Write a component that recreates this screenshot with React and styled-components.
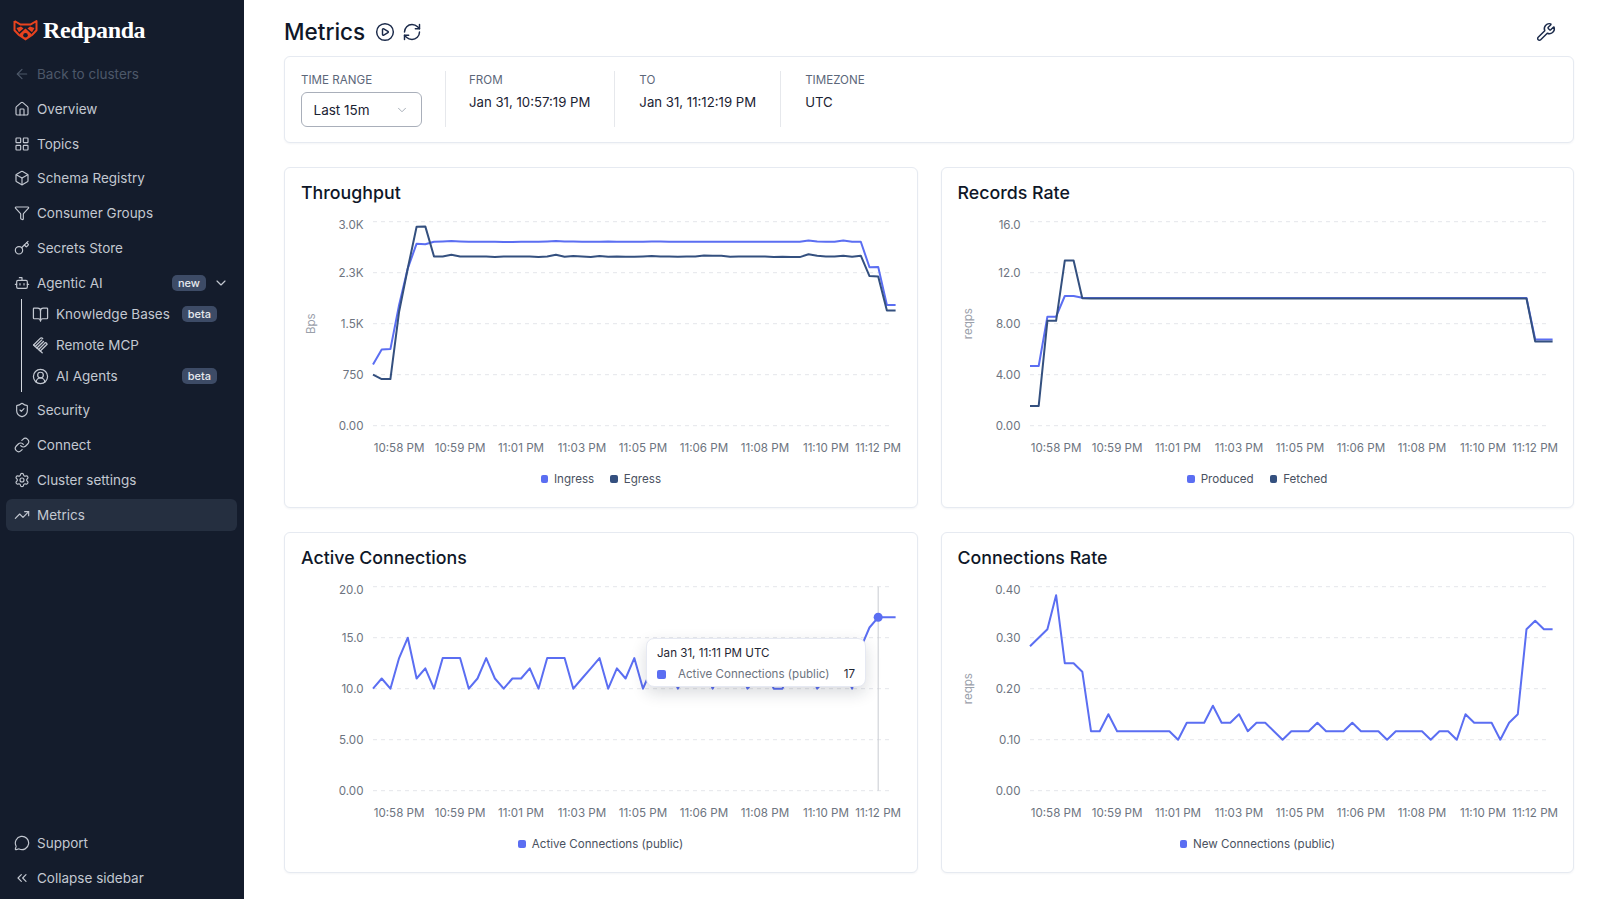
import styled, { createGlobalStyle } from "styled-components";
import {
  ArrowLeft, BookOpen, Bot, Box, ChevronDown, ChevronsLeft, CirclePlay, CircleUserRound,
  Funnel, House, Key, LayoutGrid, Link, MessageCircle, RefreshCw, Settings, ShieldCheck,
  TrendingUp, Wrench,
} from "lucide-react";

const BLUE = "#5b6ef2";
const NAVY = "#34507f";
const TICKS = [
  [3, "10:58 PM"], [10, "10:59 PM"], [17, "11:01 PM"], [24, "11:03 PM"], [31, "11:05 PM"],
  [38, "11:06 PM"], [45, "11:08 PM"], [52, "11:10 PM"], [58, "11:12 PM"],
];
const PLOT = { left: 72, right: 592, top: 15.7, bottom: 219.7, step: 8.71 };

const repeat = (v, n) => Array(n).fill(v);

const ingress = [
  902, 1122, 1127, 1775, 2314, 2676, 2667, 2706, 2711, 2715,
  2711, 2706, 2706, 2706, 2706, 2702, 2702, 2706, 2706, 2706,
  2711, 2715, 2711, 2711, 2706, 2706, 2706, 2711, 2706, 2706,
  2706, 2706, 2711, 2711, 2706, 2706, 2706, 2706, 2706, 2706,
  2706, 2706, 2706, 2706, 2706, 2706, 2706, 2706, 2706, 2706,
  2725, 2711, 2706, 2706, 2725, 2706, 2706, 2330, 2335, 1775, 1775,
];
const egress = [
  750, 686, 686, 1676, 2314, 2926, 2931, 2490, 2490, 2515,
  2490, 2490, 2490, 2490, 2480, 2490, 2490, 2490, 2490, 2480,
  2490, 2515, 2485, 2495, 2490, 2480, 2495, 2485, 2490, 2485,
  2485, 2490, 2495, 2490, 2490, 2485, 2490, 2490, 2505, 2500,
  2500, 2485, 2490, 2490, 2490, 2490, 2480, 2485, 2480, 2480,
  2520, 2500, 2490, 2490, 2500, 2485, 2500, 2200, 2195, 1695, 1695,
];
const produced = [4.68, 4.68, 8.55, 8.55, 10.17, 10.17, 10.03, ...repeat(10.02, 51), 6.77, 6.77, 6.77];
const fetched = [1.55, 1.55, 8.23, 8.23, 12.95, 12.95, 10, ...repeat(9.98, 51), 6.6, 6.6, 6.6];
const active = [
  10, 11, 10, 13, 15, 11, 12, 10, 13, 13, 13, 10, 11, 13, 11, 10, 11, 11, 12, 10,
  13, 13, 13, 10, 11, 12, 13, 10, 12, 11, 13, 10, 12, 11, 12, 10, 12, 11, 12, 10,
  12, 11, 12, 10, 11, 12, 10, 10, 12, 11, 12, 10, 11, 12, 12, 10, 14, 16, 17, 17, 17,
];
const connections = [
  17, 18, 19, 23, 15, 15, 14, 7, 7, 9, 7, 7, 7, 7, 7, 7, 7, 6, 8, 8, 8, 10, 8, 8, 9, 7, 8, 8, 7, 6,
  7, 7, 7, 8, 7, 7, 7, 8, 7, 7, 7, 6, 7, 7, 7, 7, 6, 7, 7, 6, 9, 8, 8, 8, 6, 8, 9, 19, 20, 19, 19,
].map((c) => c / 60);

const GlobalStyle = createGlobalStyle`
  html, body { margin: 0; padding: 0; background: #fff; }
  body { font-family: Inter, "Noto Sans", sans-serif; color: #101828; }
  * { box-sizing: border-box; }
`;

const Layout = styled.div`
  display: flex;
  height: 899px;
  overflow: hidden;
`;

const Sidebar = styled.aside`
  width: 244px;
  flex: none;
  display: flex;
  flex-direction: column;
  padding: 14px 7px 5px 6px;
  background: #141c2c;
`;

const Brand = styled.div`
  display: flex;
  align-items: center;
  gap: 5px;
  height: 32px;
  padding-left: 7px;
  margin-bottom: 12px;
  color: #fff;
  font-family: "Liberation Serif", serif;
  font-weight: 700;
  font-size: 24px;
  letter-spacing: -0.4px;
`;

const Nav = styled.nav`
  display: flex;
  flex-direction: column;
  gap: 2.75px;
`;

const BottomNav = styled(Nav)`
  margin-top: auto;
  gap: 3px;
`;

const Row = styled.div`
  display: flex;
  align-items: center;
  gap: 7px;
  height: ${({ $sub }) => ($sub ? "31px" : "32px")};
  padding: 0 ${({ $sub }) => ($sub ? "20px" : "8px")} 0 ${({ $sub }) => ($sub ? "0" : "8px")};
  border-radius: 6px;
  font-size: 13.5px;
  color: ${({ $dim }) => ($dim ? "#4d5869" : "#c3c8d1")};
  background: ${({ $active }) => ($active ? "#252f40" : "transparent")};
  svg { flex: none; }
`;

const SubList = styled.div`
  margin-left: 15px;
  padding-left: 10px;
  border-left: 1px solid #d4d8df;
`;

const Badge = styled.span`
  margin-left: auto;
  display: inline-flex;
  align-items: center;
  height: 16px;
  padding: 0 6px;
  border-radius: 5px;
  background: #3d4b66;
  color: #e6e9ee;
  font-size: 11px;
  font-weight: 500;
`;

const Main = styled.main`
  flex: 1;
  min-width: 0;
  padding: 0 26px 26px 40px;
`;

const Header = styled.header`
  display: flex;
  align-items: center;
  gap: 7.5px;
  height: 56px;
  padding: 7px 18px 0 0;
  color: #1b2a4a;
`;

const Title = styled.h1`
  margin: 0 2px 0 0;
  font-size: 22.5px;
  font-weight: 500;
  color: #0f1728;
`;

const WrenchButton = styled.span`
  display: flex;
  margin-left: auto;
`;

const Panel = styled.section`
  border: 1px solid #e6eaf1;
  border-radius: 6px;
  box-shadow: 0 1px 2px rgba(30, 50, 90, 0.05);
  background: #fff;
`;

const RangePanel = styled(Panel)`
  display: flex;
  height: 87px;
  padding: 14px 16px;
  margin-bottom: 24px;
`;

const Field = styled.div`
  height: 56px;
  padding-right: ${({ $tight }) => ($tight ? "23px" : "24px")};
  margin-right: ${({ $tight }) => ($tight ? "23px" : "24px")};
  border-right: 1px solid ${({ $last }) => ($last ? "transparent" : "#e6e8ec")};
`;

const FieldLabel = styled.div`
  height: 18px;
  margin-bottom: 3px;
  font-size: 11.6px;
  line-height: 18px;
  color: #5c677a;
  text-transform: uppercase;
`;

const FieldValue = styled.div`
  font-size: 13.2px;
  line-height: 20px;
  color: #1a2233;
`;

const Select = styled.div`
  display: flex;
  align-items: center;
  justify-content: space-between;
  width: 121px;
  height: 35px;
  padding: 0 12px 0 11.5px;
  border: 1px solid #a9afba;
  border-radius: 6px;
  font-size: 13.5px;
  color: #1a2233;
  svg { color: #9aa2ae; }
`;

const Grid = styled.div`
  display: grid;
  grid-template-columns: 1fr 1fr;
  grid-auto-rows: 341px;
  gap: 24px 23px;
`;

const Card = styled(Panel)`
  position: relative;
  padding: 11px 16px 0;
`;

const CardTitle = styled.h2`
  margin: 0;
  font-size: 17.8px;
  line-height: 27px;
  font-weight: 500;
  color: #0f1728;
`;

const ChartSvg = styled.svg`
  display: block;
  overflow: visible;
`;

const AxisText = styled.text`
  font-family: Inter, sans-serif;
  font-size: 11.6px;
  fill: #6d7480;
`;

const UnitText = styled(AxisText)`
  font-size: 11.5px;
  fill: #9aa0aa;
`;

const Legend = styled.div`
  display: flex;
  justify-content: center;
  gap: 16px;
  height: 16px;
  margin-top: 5px;
  font-size: 11.6px;
  line-height: 16px;
  color: #4a5261;
`;

const LegendItem = styled.span`
  display: flex;
  align-items: center;
  gap: 6px;
`;

const Swatch = styled.i`
  display: block;
  width: ${({ $size }) => $size || 7.5}px;
  height: ${({ $size }) => $size || 8}px;
  flex: none;
  border-radius: 2px;
  background: ${({ $color }) => $color};
`;

const Tooltip = styled.div`
  position: absolute;
  left: 361px;
  top: 105px;
  width: 220px;
  height: 49px;
  padding: 7px 10px 0;
  background: #fff;
  border: 1px solid #e6e9f2;
  border-radius: 8px;
  box-shadow: 0 6px 16px rgba(20, 30, 50, 0.16);
  font-size: 11.6px;
  color: #1f2633;
`;

const TooltipTitle = styled.div`
  line-height: 15px;
  margin-bottom: 6px;
`;

const TooltipRow = styled.div`
  display: flex;
  align-items: center;
  line-height: 15px;
`;

const TooltipLabel = styled.span`
  margin-left: 12px;
  color: #6d7480;
`;

const TooltipValue = styled.span`
  margin-left: auto;
`;

const toPath = (data, max) =>
  data
    .map((v, i) => {
      const x = PLOT.left + i * PLOT.step;
      const y = PLOT.bottom - (v / max) * (PLOT.bottom - PLOT.top);
      return `${i ? "L" : "M"}${x.toFixed(1)} ${y.toFixed(1)}`;
    })
    .join(" ");

const Chart = ({ series, max, labels, unit, cursor }) => {
  const gap = (PLOT.bottom - PLOT.top) / 4;
  const cursorX = cursor && PLOT.left + cursor.index * PLOT.step;
  const cursorY = cursor && PLOT.bottom - (cursor.value / max) * (PLOT.bottom - PLOT.top);
  return (
    <ChartSvg width="599" height="260" viewBox="0 0 599 260">
      {labels.map((label, i) => {
        const y = PLOT.top + i * gap;
        return (
          <g key={label}>
            <line x1={PLOT.left} x2={PLOT.right} y1={y} y2={y} stroke="#e4e6ea" strokeDasharray="4 4" />
            {/* the top label sits under its line, the rest are centred on it */}
            <AxisText x="62.5" y={i === 0 ? y + 7 : y + 4} textAnchor="end">{label}</AxisText>
          </g>
        );
      })}
      {unit && (
        <UnitText textAnchor="middle" transform={`translate(14 ${PLOT.top + 2 * gap}) rotate(-90)`}>
          {unit}
        </UnitText>
      )}
      {TICKS.map(([i, label]) => (
        <AxisText key={label} x={PLOT.left + i * PLOT.step} y="246" textAnchor="middle">{label}</AxisText>
      ))}
      {cursor && <line x1={cursorX} x2={cursorX} y1={PLOT.top} y2={PLOT.bottom} stroke="#c9ccd2" />}
      {series.map((s) => (
        <path key={s.name} d={toPath(s.data, max)} fill="none" stroke={s.color} strokeWidth="2" strokeLinejoin="round" />
      ))}
      {cursor && <circle cx={cursorX} cy={cursorY} r="4.5" fill={BLUE} />}
    </ChartSvg>
  );
};

const MetricCard = ({ title, series, max, labels, unit, cursor, children }) => (
  <Card>
    <CardTitle>{title}</CardTitle>
    <Chart series={series} max={max} labels={labels} unit={unit} cursor={cursor} />
    <Legend>
      {series.map((s) => (
        <LegendItem key={s.name}>
          <Swatch $color={s.color} />
          {s.name}
        </LegendItem>
      ))}
    </Legend>
    {children}
  </Card>
);

const RedpandaLogo = () => (
  <svg width="25" height="22" viewBox="0 0 25 22" fill="none">
    <path d="M1.5 2 7.6 5.6h9.8L23.5 2v9.2L19 16M1.5 2v9.2L6 16" stroke="#e8431f" strokeWidth="2" strokeLinejoin="round" />
    <path d="M3.5 9 8 7.6l2.5 1.8L6 13.2zM21.5 9 17 7.6l-2.5 1.8L19 13.2z" fill="#e8431f" />
    <path d="M12.5 9.6 20 16.4 12.5 21.5 5 16.4z" fill="#e8431f" />
    <circle cx="12.5" cy="16.2" r="2.3" fill="#141c2c" />
  </svg>
);

const McpIcon = () => (
  <svg width="17" height="17" viewBox="0 0 16 16" fill="none" stroke="currentColor" strokeWidth="1.2" strokeLinecap="round">
    <path d="M1.5 7.5 7.5 1.5c1-1 2-.8 2.6 0" />
    <path d="M3 9l6.3-6.3" />
    <path d="M4.6 10.4l6.2-6.2" />
    <path d="M6.2 11.8l6-6" />
    <path d="M7.8 13.2l6.4-6.4c-.2-1-.8-1.6-1.8-1.6" />
    <path d="M1.5 7.5l6.3 5.7 1.8 1.6" />
  </svg>
);

const NavRow = ({ icon: Icon, label, ...rest }) => (
  <Row {...rest}>
    <Icon size={16} strokeWidth={1.75} />
    {label}
  </Row>
);

export default function App() {
  return (
    <Layout>
      <GlobalStyle />
      <Sidebar>
        <Brand>
          <RedpandaLogo />
          Redpanda
        </Brand>
        <Nav>
          <NavRow icon={ArrowLeft} label="Back to clusters" $dim />
          <NavRow icon={House} label="Overview" />
          <NavRow icon={LayoutGrid} label="Topics" />
          <NavRow icon={Box} label="Schema Registry" />
          <NavRow icon={Funnel} label="Consumer Groups" />
          <NavRow icon={Key} label="Secrets Store" />
          <div>
            <Row>
              <Bot size={16} strokeWidth={1.75} />
              Agentic AI
              <Badge>new</Badge>
              <ChevronDown size={16} strokeWidth={1.75} />
            </Row>
            <SubList>
              <Row $sub>
                <BookOpen size={17} strokeWidth={1.75} />
                Knowledge Bases
                <Badge>beta</Badge>
              </Row>
              <Row $sub>
                <McpIcon />
                Remote MCP
              </Row>
              <Row $sub>
                <CircleUserRound size={17} strokeWidth={1.75} />
                AI Agents
                <Badge>beta</Badge>
              </Row>
            </SubList>
          </div>
          <NavRow icon={ShieldCheck} label="Security" />
          <NavRow icon={Link} label="Connect" />
          <NavRow icon={Settings} label="Cluster settings" />
          <NavRow icon={TrendingUp} label="Metrics" $active />
        </Nav>
        <BottomNav>
          <NavRow icon={MessageCircle} label="Support" />
          <NavRow icon={ChevronsLeft} label="Collapse sidebar" />
        </BottomNav>
      </Sidebar>
      <Main>
        <Header>
          <Title>Metrics</Title>
          <CirclePlay size={20} strokeWidth={1.75} />
          <RefreshCw size={20} strokeWidth={1.75} />
          <WrenchButton>
            <Wrench size={20} strokeWidth={1.75} />
          </WrenchButton>
        </Header>
        <RangePanel>
          <Field $tight>
            <FieldLabel>Time range</FieldLabel>
            <Select>
              Last 15m
              <ChevronDown size={14} strokeWidth={1.5} />
            </Select>
          </Field>
          <Field>
            <FieldLabel>From</FieldLabel>
            <FieldValue>Jan 31, 10:57:19 PM</FieldValue>
          </Field>
          <Field>
            <FieldLabel>To</FieldLabel>
            <FieldValue>Jan 31, 11:12:19 PM</FieldValue>
          </Field>
          <Field $last>
            <FieldLabel>Timezone</FieldLabel>
            <FieldValue>UTC</FieldValue>
          </Field>
        </RangePanel>
        <Grid>
          <MetricCard
            title="Throughput"
            max={3000}
            labels={["3.0K", "2.3K", "1.5K", "750", "0.00"]}
            unit="Bps"
            series={[
              { name: "Ingress", color: BLUE, data: ingress },
              { name: "Egress", color: NAVY, data: egress },
            ]}
          />
          <MetricCard
            title="Records Rate"
            max={16}
            labels={["16.0", "12.0", "8.00", "4.00", "0.00"]}
            unit="reqps"
            series={[
              { name: "Produced", color: BLUE, data: produced },
              { name: "Fetched", color: NAVY, data: fetched },
            ]}
          />
          <MetricCard
            title="Active Connections"
            max={20}
            labels={["20.0", "15.0", "10.0", "5.00", "0.00"]}
            cursor={{ index: 58, value: 17 }}
            series={[{ name: "Active Connections (public)", color: BLUE, data: active }]}
          >
            <Tooltip>
              <TooltipTitle>Jan 31, 11:11 PM UTC</TooltipTitle>
              <TooltipRow>
                <Swatch $color={BLUE} $size={9} />
                <TooltipLabel>Active Connections (public)</TooltipLabel>
                <TooltipValue>17</TooltipValue>
              </TooltipRow>
            </Tooltip>
          </MetricCard>
          <MetricCard
            title="Connections Rate"
            max={0.4}
            labels={["0.40", "0.30", "0.20", "0.10", "0.00"]}
            unit="reqps"
            series={[{ name: "New Connections (public)", color: BLUE, data: connections }]}
          />
        </Grid>
      </Main>
    </Layout>
  );
}
